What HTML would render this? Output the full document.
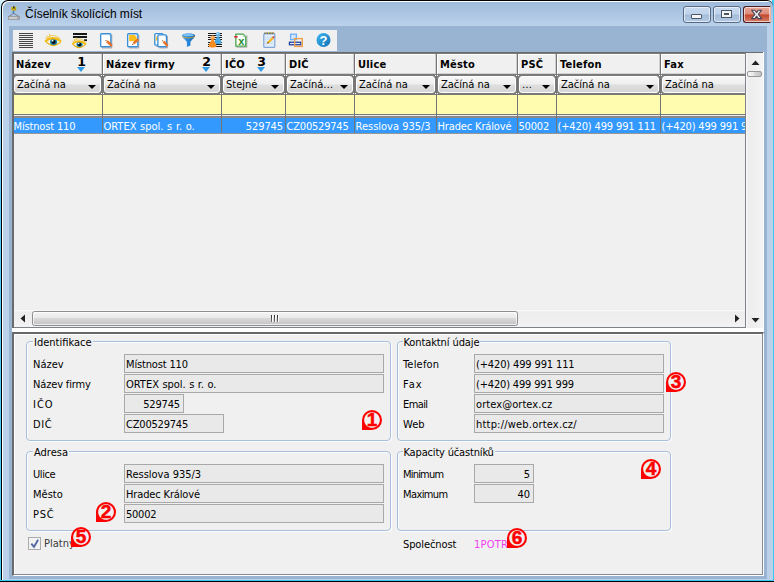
<!DOCTYPE html>
<html lang="cs">
<head>
<meta charset="utf-8">
<title>Číselník školících míst</title>
<style>
html,body{margin:0;padding:0;}
body{width:774px;height:582px;position:relative;overflow:hidden;background:linear-gradient(#e2f5fd 0,#a8e0fb 12px,#5cc8ff 200px,#45caf5 582px);font-family:"DejaVu Sans Condensed","Liberation Sans",sans-serif;font-size:11px;color:#000;}
.a{position:absolute;}
i{position:absolute;display:block;}
#outl{left:0;top:0;width:2px;height:582px;background:linear-gradient(#d4f0fb 0,#8bd6fb 40px,#5cc8ff 200px,#45caf5 582px);}
#outr{left:772px;top:0;width:2px;height:582px;background:#3ec8f3;}
#outb{left:0;top:580px;width:774px;height:2px;background:linear-gradient(#35cdf3 0,#35cdf3 1px,#000 1px);}
#win{left:1px;top:0;width:772px;height:580px;box-sizing:border-box;border:1px solid #000;border-right:none;border-bottom:none;border-radius:7px 6px 0 0;background:linear-gradient(#9eb9da 0,#a3bddd 4px,#bbd2eb 25px,#bbd1ea 27px,#bbd1ea 100%);box-shadow:inset 1px 1px 0 #fff;}
#ws{left:9px;top:26px;width:758px;height:553px;background:#99b4d3;}
#title{position:absolute;left:25px;top:6px;font-family:"Liberation Sans",sans-serif;font-size:12px;letter-spacing:-0.1px;line-height:16px;height:16px;white-space:nowrap;}
.cb{position:absolute;top:6px;width:26px;height:15px;border:1px solid #566a86;border-radius:3px;box-shadow:inset 0 0 0 1px rgba(255,255,255,.6);background:linear-gradient(#c9daef 0,#bfd3eb 47%,#a3bcd9 53%,#b4cae5 100%);}
#bclose{background:linear-gradient(#eaa999 0,#dc8a78 47%,#c2452b 53%,#d47f6a 100%);border-color:#4d1a20;border-right-color:#e9b5a8;border-radius:3px 0 0 3px;}
#toolbar{left:13px;top:30px;width:324px;height:21px;background:#f0f0f0;}
#toolbar svg{position:absolute;}
#gridbox{left:12px;top:52px;width:752px;height:280px;background:#fff;}
#gridbox:before{content:"";position:absolute;left:0;top:0;width:751px;height:276px;background:#f0f0f0;border-left:2px solid #6b6b6b;border-top:1px solid #6b6b6b;box-sizing:border-box;}
#grid{left:14px;top:0;width:732px;height:328px;overflow:hidden;}
#grid:before{content:"";position:absolute;left:0;top:53px;width:733px;height:62px;background:#7a7a7a;border-bottom:1px solid #ececec;}
.hc{position:absolute;top:54px;height:20px;box-sizing:border-box;background:#f0f0f0;border-top:1px solid #fff;border-bottom:1px solid #d2d2d2;box-shadow:-1px 0 0 #fff;font-weight:bold;}
.hc:after{content:"";position:absolute;right:0;top:-1px;width:1px;height:20px;background:#cfcfcf;}
.ht{position:absolute;left:2px;top:3px;line-height:14px;white-space:nowrap;letter-spacing:.2px;}
.sn{position:absolute;width:15.4px;text-align:center;top:0px;line-height:14px;font-size:12.5px;font-family:"DejaVu Sans",sans-serif;}
.st{top:12px;width:0;height:0;border-left:4.7px solid transparent;border-right:4.7px solid transparent;border-top:5px solid #2f9be6;}
.fc{position:absolute;top:76px;height:17px;box-sizing:border-box;border:1px solid #fff;border-radius:3px;background:linear-gradient(#f6f6f6 0,#efefef 45%,#dedede 55%,#d6d6d6 100%);}
.ft{position:absolute;left:2px;top:1px;line-height:14px;white-space:nowrap;}
.dd{right:4px;top:8px;width:0;height:0;border-left:4px solid transparent;border-right:4px solid transparent;border-top:4px solid #000;}
.yc{position:absolute;top:95px;height:19px;background:#fffcb0;margin-left:-1px;padding-right:1px;}
.sc{position:absolute;top:116px;height:17px;box-sizing:content-box;height:15px;border-top:2px solid #8a8a8a;background:#3399ff;color:#fff;margin-left:-1px;padding-right:1px;white-space:nowrap;overflow:hidden;}
.sc span{position:absolute;left:.5px;top:2px;line-height:14px;}
.sc.r span{left:auto;right:2px;}
.vs{position:absolute;top:53px;width:1px;height:81px;background:#757575;}
.vs:before{content:"";position:absolute;left:-1px;top:22px;width:1px;height:1px;background:#fff;box-shadow:2px 0 #fff,0 18px #fff,2px 18px #fff;}
#rowline{left:0;top:133px;width:733px;height:1px;background:#969696;}
#panel{left:12px;top:332px;width:752px;height:244px;background:#f0f0f0;box-sizing:border-box;border:1px solid #7f838c;border-left:2px solid #6b6b6b;border-top:2px solid #686868;border-right-color:#fff;border-bottom-color:#fff;box-shadow:inset 1px 1px 0 #fff;}
#panel:before{content:"";position:absolute;right:0;top:0;width:1px;height:240px;background:#868a93;}
#panel:after{content:"";position:absolute;left:0;bottom:0;width:749px;height:1px;background:#868a93;}
.gb{position:absolute;box-sizing:border-box;border:1px solid #a8bfdc;border-radius:4px;box-shadow:inset 1px 1px 0 #fbfcfd,1px 1px 0 #fbfcfd;}
.gl{position:absolute;top:-6px;left:6px;padding:0 1px;background:#f0f0f0;line-height:14px;white-space:nowrap;}
.lb{position:absolute;line-height:14px;white-space:nowrap;}
.fd{position:absolute;box-sizing:border-box;height:19px;border:1px solid #a9a9a9;background:#e9e9e9;line-height:15px;padding:2px 2px 0 1px;white-space:nowrap;overflow:hidden;}
.fd.r{text-align:right;padding-right:3px;}
.co{position:absolute;box-sizing:border-box;width:20px;height:20px;border-radius:10px 10px 10px 0;background:radial-gradient(circle at 10px 10px,#f0f0f0 0,#f0f0f0 7.3px,#f00 8.3px);color:#f00;font-family:"Liberation Sans",sans-serif;font-weight:bold;font-size:19px;line-height:20px;text-align:center;letter-spacing:-.5px;text-indent:-.5px;-webkit-text-stroke:.5px #f00;}
#chk{left:28px;top:537px;width:13px;height:13px;box-sizing:border-box;border:1px solid #ababab;background:#f3f3f3;}
#chk svg{position:absolute;left:-1px;top:-1px;}
#hsb{left:0;top:310px;width:731px;height:17px;background:linear-gradient(#fdfdfd 0,#ececec 2px,#efefef 50%,#f3f3f3 100%);}
#hth{left:18px;top:1px;width:486px;height:15px;box-sizing:border-box;border:1px solid #8e8e8e;border-radius:2.5px;background:linear-gradient(#f5f5f5 0,#e9e9e9 46%,#d9d9d9 50%,#c3c3c3 100%);box-shadow:inset 0 0 0 1px rgba(255,255,255,.7);}
#hth i{width:1px;height:7px;background:linear-gradient(#2a2a2a,#777);box-shadow:1px 0 0 #fff;}
#grid:after{content:"";position:absolute;left:0;top:327px;width:733px;height:1px;background:#7e8289;}
#gridr{left:745px;top:53px;width:1px;height:275px;background:#7e8289;}
#vsb{left:746px;top:53px;width:17px;height:275px;background:linear-gradient(90deg,#fafafa 0,#ededed 2px,#efefef 50%,#f4f4f4 100%);}
#vth{left:1px;top:18px;width:15px;height:6px;box-sizing:border-box;border:1px solid #979797;border-radius:2px;background:linear-gradient(90deg,#f5f5f5 0,#e9e9e9 46%,#d9d9d9 50%,#c3c3c3 100%);}
</style>
</head>
<body>
<div class="a" id="outl"></div><div class="a" id="outr"></div><div class="a" id="outb"></div>
<div class="a" id="win"></div>
<div class="a" id="ws"></div>
<svg class="a" style="left:7px;top:5px" width="14" height="16" viewBox="7 5 14 16"><path d="M11.2 6.6l1.4.4 1.2-.9 1.2.9 1.4-.4-.3 2 .3 1.6-1.6.5-1 .2-1-.2-1.6-.5.3-1.6z" fill="#d8b416"/><path d="M13.1 6.3h1.4l.2 2.2h-1.8z" fill="#1c3c40"/><circle cx="12.3" cy="9" r=".6" fill="#8a7410"/><circle cx="15.3" cy="9" r=".6" fill="#8a7410"/><path d="M13.8 10.6v1.2c-1 .3-1 1.3.1 1.7" fill="none" stroke="#2c7ec2" stroke-width="1.2"/><path d="M13.8 13.4L8.6 16.6M13.8 13.4l5.4 3.2" stroke="#6e7884" stroke-width=".9" fill="none"/><rect x="8.4" y="16.6" width="11" height="2.9" fill="#cdcdcd" stroke="#8c8c92" stroke-width=".7"/><rect x="17" y="16.9" width="2.2" height="2.4" fill="#a8a8ac"/></svg>
<div id="title">Číselník školících míst</div>
<div class="cb" id="bmin" style="left:683px"><i style="left:7px;top:7px;width:9px;height:3px;border:1px solid #4b566a;background:#f6f6f6;border-radius:1px"></i></div>
<div class="cb" id="bmax" style="left:713px"><i style="left:8px;top:4px;width:5px;height:2px;border:2px solid #f4f4f4;outline:1px solid #4b566a;background:#8aa3c6;box-shadow:inset 0 0 0 1px #4b566a"></i></div>
<div class="cb" id="bclose" style="left:743px"><svg class="a" style="left:6px;top:2px" width="14" height="11" viewBox="0 0 14 11"><path d="M1.6 1.2L4.9 1.2L6.6 3.6L8.3 1.2L11.6 1.2L8.3 5.4L11.7 9.6L8.3 9.6L6.6 7.1L4.9 9.6L1.5 9.6L4.9 5.4z" fill="#f6f6f6" stroke="#4a4458" stroke-width="1.1" stroke-linejoin="round"/></svg></div>
<div class="a" id="toolbar"><svg width="324" height="21" viewBox="13 30 324 21" style="left:0;top:0">
<defs>
<linearGradient id="gHelp" x1="0" y1="0" x2="1" y2="1"><stop offset="0" stop-color="#3db8ee"/><stop offset="1" stop-color="#0f6fb8"/></linearGradient>
<linearGradient id="gFun" x1="0" y1="0" x2="1" y2="0"><stop offset="0" stop-color="#4aa8f0"/><stop offset=".5" stop-color="#2486dc"/><stop offset="1" stop-color="#165cac"/></linearGradient>
<linearGradient id="gPen" x1="0" y1="0" x2="1" y2="1"><stop offset="0" stop-color="#7a3a10"/><stop offset=".3" stop-color="#f08a28"/><stop offset="1" stop-color="#d8541a"/></linearGradient>
<clipPath id="cEye"><path d="M45.5 41Q53 34.5 61 41.5Q53 49.6 45.5 41z"/></clipPath>
</defs>
<!-- 1 list -->
<path d="M19 33.5h14M19 35.5h14M19 37.5h14M19 39.5h14M19 41.5h14M19 43.5h14M19 45.5h14M19 47.5h14" stroke="#303030" stroke-width=".9"/>
<!-- 2 eye -->
<g>
<path d="M45.5 41Q53 34.5 61 41.5Q53 49.6 45.5 41z" fill="#f7f2e4"/>
<g clip-path="url(#cEye)"><circle cx="53.6" cy="42.1" r="3.6" fill="#2190bc"/><circle cx="53.6" cy="42.1" r="2.7" fill="#166a96"/><circle cx="53.6" cy="41.9" r="1.9" fill="#050b10"/><circle cx="52.6" cy="40.7" r=".9" fill="#fff"/></g>
<path d="M45.5 41.2Q53 49.7 61 41.6" fill="none" stroke="#e6b010" stroke-width="1.2"/>
<path d="M45.2 41.2Q53 35 61 41.3" fill="none" stroke="#f2b90a" stroke-width="2.1"/>
<path d="M46.4 38.3Q52.6 32.4 60.2 38.6" fill="none" stroke="#edc440" stroke-width=".9"/>
<path d="M49.9 37l-.5-3.2M48.4 37.6l-1.3-2.2M47 38.8l-1.6-1.2" fill="none" stroke="#f0c030" stroke-width=".9"/>
</g>
<!-- 3 lines + eye -->
<g>
<rect x="73" y="33" width="14" height="2" fill="#161616"/><rect x="73" y="36" width="14" height="2" fill="#161616"/><rect x="84" y="39.3" width="3" height="1.8" fill="#141414"/>
<g transform="translate(33.48 8.44) scale(0.86)">
<path d="M45.5 41Q53 34.5 61 41.5Q53 49.6 45.5 41z" fill="#f7f2e4"/>
<g clip-path="url(#cEye)"><circle cx="53.6" cy="42.1" r="3.6" fill="#2190bc"/><circle cx="53.6" cy="42.1" r="2.7" fill="#166a96"/><circle cx="53.6" cy="41.9" r="1.9" fill="#050b10"/><circle cx="52.6" cy="40.7" r=".9" fill="#fff"/></g>
<path d="M45.5 41.2Q53 49.7 61 41.6" fill="none" stroke="#e6b010" stroke-width="1.2"/>
<path d="M45.2 41.2Q53 35 61 41.3" fill="none" stroke="#f2b90a" stroke-width="2.1"/>
<path d="M46.4 38.3Q52.6 32.4 60.2 38.6" fill="none" stroke="#edc440" stroke-width=".9"/>
<path d="M49.9 37l-.5-3.2M48.4 37.6l-1.3-2.2M47 38.8l-1.6-1.2" fill="none" stroke="#f0c030" stroke-width=".9"/>
</g>
</g>
<!-- 4 doc + pencil -->
<g>
<path d="M111.75000000000001 34.95v13.0h-9.7" fill="none" stroke="#5b5560" stroke-opacity=".55" stroke-width=".9"/><rect x="100.65" y="33.75" width="10.2" height="13.0" rx="1" fill="#fff" stroke="#3a8fd6" stroke-width="1.35"/><path d="M108.25000000000001 34.55h1.9v1.9z" fill="#9fd0f4"/>
<path d="M106.10 42.18L111.05 46.81L112.75 44.99L107.81 40.36z" fill="#e2601c"/><path d="M106.79 41.45L111.73 46.08" stroke="#f69a3c" stroke-width=".8"/><path d="M105.50 39.90L106.10 42.18L107.81 40.36z" fill="#ecc79a"/><path d="M105.50 39.90L105.77 40.93L106.54 40.11z" fill="#3c2a20"/>
</g>
<!-- 5 doc yellow + pencil -->
<g>
<path d="M138.75 34.95v13.0h-9.7" fill="none" stroke="#5b5560" stroke-opacity=".55" stroke-width=".9"/><rect x="127.65" y="33.75" width="10.2" height="13.0" rx="1" fill="#fff" stroke="#3a8fd6" stroke-width="1.35"/><path d="M135.25 34.55h1.9v1.9z" fill="#9fd0f4"/>
<path d="M129.2 35h5.6l1.9 1.9v4.4h-7.5z" fill="#f9be1c"/>
<path d="M134.33 44.61L139.13 40.33L137.47 38.47L132.66 42.74z" fill="#e2601c"/><path d="M133.66 43.86L138.47 39.59" stroke="#f69a3c" stroke-width=".8"/><path d="M132.00 45.00L134.33 44.61L132.66 42.74z" fill="#ecc79a"/><path d="M132.00 45.00L133.05 44.82L132.30 43.98z" fill="#3c2a20"/>
</g>
<!-- 6 two docs + pencil -->
<g>
<path d="M163.9 34.800000000000004v11.6h-7.699999999999999" fill="none" stroke="#5b5560" stroke-opacity=".55" stroke-width=".9"/><rect x="154.8" y="33.6" width="8.2" height="11.6" rx="1" fill="#fff" stroke="#3a8fd6" stroke-width="1.35"/><path d="M160.4 34.4h1.9v1.9z" fill="#9fd0f4"/>
<rect x="155.7" y="36.4" width="1.7" height="4.2" fill="#f9c838"/>
<path d="M167.4 36.1v11.8h-8.1" fill="none" stroke="#5b5560" stroke-opacity=".55" stroke-width=".9"/><rect x="157.9" y="34.9" width="8.6" height="11.8" rx="1" fill="#fff" stroke="#3a8fd6" stroke-width="1.35"/><path d="M163.9 35.699999999999996h1.9v1.9z" fill="#9fd0f4"/>
<path d="M162.66 42.44L166.77 46.70L168.43 45.10L164.32 40.84z" fill="#e2601c"/><path d="M163.32 41.80L167.43 46.06" stroke="#f69a3c" stroke-width=".8"/><path d="M162.10 40.20L162.66 42.44L164.32 40.84z" fill="#ecc79a"/><path d="M162.10 40.20L162.35 41.21L163.10 40.49z" fill="#3c2a20"/>
</g>
<!-- 7 funnel -->
<g>
<path d="M182 35.4C182 33 195 33 195 35.4C195 37.4 190.8 40.8 190.4 42V45.6L186.9 46.9V42C186.5 40.8 182 37.4 182 35.4z" fill="url(#gFun)"/>
<ellipse cx="188.5" cy="35.1" rx="5.4" ry="1.2" fill="#7cc2f4"/>
<path d="M182.4 36.6C184.8 38.3 192.4 38.3 194.7 36.6" fill="none" stroke="#d2a224" stroke-width=".9"/>
</g>
<!-- 8 lines + people -->
<g>
<path d="M208 33.6h14.4M208 35.7h14.4M208 37.8h14.4M208 39.9h14.4M208 42.1h14.4M208 44.1h14.4M208 46.2h14.4" stroke="#1c1c1c" stroke-width="1" shape-rendering="crispEdges"/>
<path d="M217 36.2h2C219.4 38.6 221.4 40 221.6 43C220.4 44.3 215.6 44.3 214.2 43C214.5 40 216.6 38.6 217 36.2z" fill="#48a6e0"/><circle cx="218" cy="34.2" r="2.2" fill="#68b8ec"/><circle cx="217.6" cy="33.6" r=".8" fill="#c4e4f8"/>
<path d="M211.6 39.6h2C214 42 216.3 43.4 216.5 46.4C215.2 47.7 209.9 47.7 208.6 46.4C208.8 43.4 211.2 42 211.6 39.6z" fill="#f68c1e"/><circle cx="212.6" cy="37.7" r="2.3" fill="#f8a248"/><circle cx="212.2" cy="37" r=".8" fill="#fde0c0"/>
</g>
<!-- 9 excel -->
<g>
<path d="M246.9 35.4v11.8h-10.4" fill="none" stroke="#4c5a4c" stroke-opacity=".5" stroke-width=".9"/>
<path d="M235.85 34.1h7.4l2.5 2.5v9.6h-9.9z" fill="#fff" stroke="#45a24c" stroke-width="1.3" stroke-linejoin="round"/>
<path d="M243.2 34.4v2.3h2.3" fill="#e4f2e4" stroke="#8cc890" stroke-width=".7"/>
<rect x="234.3" y="36" width="3.3" height="1.6" fill="#d81e28"/>
<text x="238.2" y="45.4" font-family="Liberation Sans,sans-serif" font-weight="bold" font-size="11" fill="#1e8a2e">x</text>
</g>
<!-- 10 notepad -->
<g>
<rect x="263.8" y="33.6" width="11" height="13.8" rx="1" fill="#e2edfb" stroke="#7fa6d6" stroke-width="1.2"/>
<path d="M265 37.5h8.6M265 39.5h8.6M265 41.5h8.6M265 43.5h8.6" stroke="#c3d8f2" stroke-width=".7"/>
<path d="M264.4 33.3h9.8" stroke="#4a5a74" stroke-width="1.6"/><path d="M265.5 33h1.2M268 33h1.2M270.5 33h1.2M272.8 33h1" stroke="#e8cc4a" stroke-width="1.4"/>
<path d="M267.2 43.6l.6-2 4.4-4.6 1.5 1.4-4.4 4.6z" fill="#f6b61e"/><path d="M272.2 37l1-1 1.5 1.4-1 1z" fill="#d2402c"/><path d="M267 43.8l.7-2.1 1.3 1.3z" fill="#6a4a2a"/>
</g>
<!-- 11 boxes -->
<g>
<rect x="290.6" y="34.2" width="5.8" height="5.4" fill="#d3e7fc" stroke="#6eb0f4" stroke-width="1.3"/>
<rect x="288.8" y="41.6" width="12.6" height="3.8" fill="#1d3f9c"/><rect x="290" y="42.9" width="10.2" height="1.2" fill="#e6ecf8"/>
<rect x="294.7" y="38.6" width="7.6" height="7.8" fill="none" stroke="#f0a04c" stroke-width="1.4"/>
</g>
<!-- 12 help -->
<g>
<circle cx="323.5" cy="40" r="7" fill="url(#gHelp)"/>
<text x="323.5" y="45" text-anchor="middle" font-family="Liberation Sans,sans-serif" font-weight="bold" font-size="13" fill="#fff">?</text>
</g>
</svg>
</div>
<div class="a" id="gridbox"></div>
<div class="a" id="grid">
<div class="hc" style="left:0px;width:88px"><span class="ht">Název</span><span class="sn" style="left:60px">1</span><i class="st" style="left:63px"></i></div><div class="fc" style="left:0px;width:87px"><span class="ft">Začíná na</span><i class="dd"></i></div><div class="yc" style="left:0px;width:88px"></div><div class="sc" style="left:0px;width:88px;letter-spacing:-.15px"><span>Místnost 110</span></div><div class="vs" style="left:88px"></div>
<div class="hc" style="left:90px;width:117px"><span class="ht">Název firmy</span><span class="sn" style="left:95px">2</span><i class="st" style="left:98px"></i></div><div class="fc" style="left:90px;width:116px"><span class="ft">Začíná na</span><i class="dd"></i></div><div class="yc" style="left:90px;width:117px"></div><div class="sc" style="left:90px;width:117px;word-spacing:.5px"><span>ORTEX spol. s r. o.</span></div><div class="vs" style="left:207px"></div>
<div class="hc" style="left:209px;width:62px"><span class="ht">IČO</span><span class="sn" style="left:31px">3</span><i class="st" style="left:34px"></i></div><div class="fc" style="left:209px;width:61px"><span class="ft">Stejné</span><i class="dd"></i></div><div class="yc" style="left:209px;width:62px"></div><div class="sc r" style="left:209px;width:62px;letter-spacing:-.1px"><span>529745</span></div><div class="vs" style="left:271px"></div>
<div class="hc" style="left:273px;width:67px"><span class="ht">DIČ</span></div><div class="fc" style="left:273px;width:66px"><span class="ft">Začíná…</span><i class="dd"></i></div><div class="yc" style="left:273px;width:67px"></div><div class="sc" style="left:273px;width:67px;letter-spacing:-.2px"><span>CZ00529745</span></div><div class="vs" style="left:340px"></div>
<div class="hc" style="left:342px;width:80px"><span class="ht">Ulice</span></div><div class="fc" style="left:342px;width:79px"><span class="ft">Začíná na</span><i class="dd"></i></div><div class="yc" style="left:342px;width:80px"></div><div class="sc" style="left:342px;width:80px"><span>Resslova 935/3</span></div><div class="vs" style="left:422px"></div>
<div class="hc" style="left:424px;width:79px"><span class="ht">Město</span></div><div class="fc" style="left:424px;width:78px"><span class="ft">Začíná na</span><i class="dd"></i></div><div class="yc" style="left:424px;width:79px"></div><div class="sc" style="left:424px;width:79px;letter-spacing:-.14px"><span>Hradec Králové</span></div><div class="vs" style="left:503px"></div>
<div class="hc" style="left:505px;width:37px"><span class="ht">PSČ</span></div><div class="fc" style="left:505px;width:36px"><span class="ft">…</span><i class="dd"></i></div><div class="yc" style="left:505px;width:37px"></div><div class="sc" style="left:505px;width:37px;letter-spacing:-.2px"><span>50002</span></div><div class="vs" style="left:542px"></div>
<div class="hc" style="left:544px;width:102px"><span class="ht">Telefon</span></div><div class="fc" style="left:544px;width:101px"><span class="ft">Začíná na</span><i class="dd"></i></div><div class="yc" style="left:544px;width:102px"></div><div class="sc" style="left:544px;width:102px;letter-spacing:-.14px"><span>(+420) 499 991 111</span></div><div class="vs" style="left:646px"></div>
<div class="hc" style="left:648px;width:113px"><span class="ht">Fax</span></div><div class="fc" style="left:648px;width:112px"><span class="ft">Začíná na</span></div><div class="yc" style="left:648px;width:113px"></div><div class="sc" style="left:648px;width:113px;letter-spacing:-.17px"><span>(+420) 499 991 999</span></div><div class="vs" style="left:761px"></div>
<div class="a" id="rowline"></div>
<div class="a" id="hsb">
<svg class="a" style="left:6px;top:4px" width="6" height="9" viewBox="0 0 6 9"><path d="M5 0.5v8L0.5 4.5z" fill="#222"/></svg>
<svg class="a" style="left:720px;top:4px" width="6" height="9" viewBox="0 0 6 9"><path d="M1 0.5v8L5.5 4.5z" fill="#222"/></svg>
<div class="a" id="hth"><i style="left:238px;top:3px"></i><i style="left:241px;top:3px"></i><i style="left:244px;top:3px"></i></div>
</div>
</div>
<div class="a" id="panel"></div>
<div class="gb" style="left:26px;top:341px;width:365px;height:100px"><span class="gl">Identifikace</span></div>
<div class="gb" style="left:26px;top:451px;width:365px;height:80px"><span class="gl">Adresa</span></div>
<div class="gb" style="left:397px;top:341px;width:274px;height:100px"><span class="gl" style="letter-spacing:-0.1px;margin-left:-1.5px">Kontaktní údaje</span></div>
<div class="gb" style="left:397px;top:451px;width:274px;height:80px"><span class="gl" style="letter-spacing:-0.17px;margin-left:-1.5px">Kapacity účastníků</span></div>
<div class="lb" style="left:33px;top:358px">Název</div>
<div class="lb" style="left:33px;top:378px;letter-spacing:-0.15px">Název firmy</div>
<div class="lb" style="left:33px;top:398px;letter-spacing:1.0px">IČO</div>
<div class="lb" style="left:33px;top:418px;letter-spacing:0.6px">DIČ</div>
<div class="fd" style="left:124px;top:354px;width:260px;letter-spacing:-0.15px">Místnost 110</div>
<div class="fd" style="left:124px;top:374px;width:260px;word-spacing:.3px">ORTEX spol. s r. o.</div>
<div class="fd r" style="left:124px;top:394px;width:60px;letter-spacing:-0.15px">529745</div>
<div class="fd" style="left:124px;top:414px;width:100px;letter-spacing:-0.2px">CZ00529745</div>
<div class="lb" style="left:33px;top:468px;letter-spacing:-0.4px">Ulice</div>
<div class="lb" style="left:33px;top:488px">Město</div>
<div class="lb" style="left:33px;top:508px;letter-spacing:0.8px">PSČ</div>
<div class="fd" style="left:124px;top:464px;width:260px">Resslova 935/3</div>
<div class="fd" style="left:124px;top:484px;width:260px;letter-spacing:-0.14px">Hradec Králové</div>
<div class="fd" style="left:124px;top:504px;width:260px;letter-spacing:-0.25px">50002</div>
<div class="lb" style="left:403px;top:358px;letter-spacing:0.2px">Telefon</div>
<div class="lb" style="left:403px;top:378px;letter-spacing:1.0px">Fax</div>
<div class="lb" style="left:403px;top:398px;letter-spacing:-0.6px">Email</div>
<div class="lb" style="left:403px;top:418px">Web</div>
<div class="fd" style="left:474px;top:354px;width:190px;letter-spacing:-0.14px">(+420) 499 991 111</div>
<div class="fd" style="left:474px;top:374px;width:190px;letter-spacing:-0.17px">(+420) 499 991 999</div>
<div class="fd" style="left:474px;top:394px;width:190px;letter-spacing:0.08px">ortex@ortex.cz</div>
<div class="fd" style="left:474px;top:414px;width:190px;letter-spacing:0.2px">http://web.ortex.cz/</div>
<div class="lb" style="left:403px;top:468px;letter-spacing:-0.8px">Minimum</div>
<div class="lb" style="left:403px;top:488px;letter-spacing:-0.6px">Maximum</div>
<div class="fd r" style="left:474px;top:464px;width:60px">5</div>
<div class="fd r" style="left:474px;top:484px;width:60px">40</div>
<div class="a" id="chk"><svg width="13" height="13" viewBox="0 0 13 13"><path d="M3.3 6.6L6 9.9L10.1 2.8" fill="none" stroke="#5266a2" stroke-width="1.9"/></svg></div>
<div class="lb" style="left:44px;top:537px;color:#3a3a3a">Platný</div>
<div class="lb" style="left:403px;top:538px;letter-spacing:-0.1px">Společnost</div>
<div class="lb" style="left:474px;top:538px;color:#f03cf0;letter-spacing:0.25px">1POTR</div>
<div class="co" style="left:362px;top:410px">1</div>
<div class="co" style="left:96px;top:502px">2</div>
<div class="co" style="left:666px;top:372px">3</div>
<div class="co" style="left:641px;top:459px">4</div>
<div class="co" style="left:71px;top:527px">5</div>
<div class="co" style="left:507px;top:528px">6</div>
<div class="a" id="gridr"></div>
<div class="a" id="vsb">
<svg class="a" style="left:5px;top:7px" width="9" height="6" viewBox="0 0 9 6"><path d="M0.5 5h8L4.5 0.5z" fill="#222"/></svg>
<svg class="a" style="left:5px;top:264px" width="9" height="6" viewBox="0 0 9 6"><path d="M0.5 1h8L4.5 5.5z" fill="#222"/></svg>
<div class="a" id="vth"></div>
</div>
</body>
</html>
